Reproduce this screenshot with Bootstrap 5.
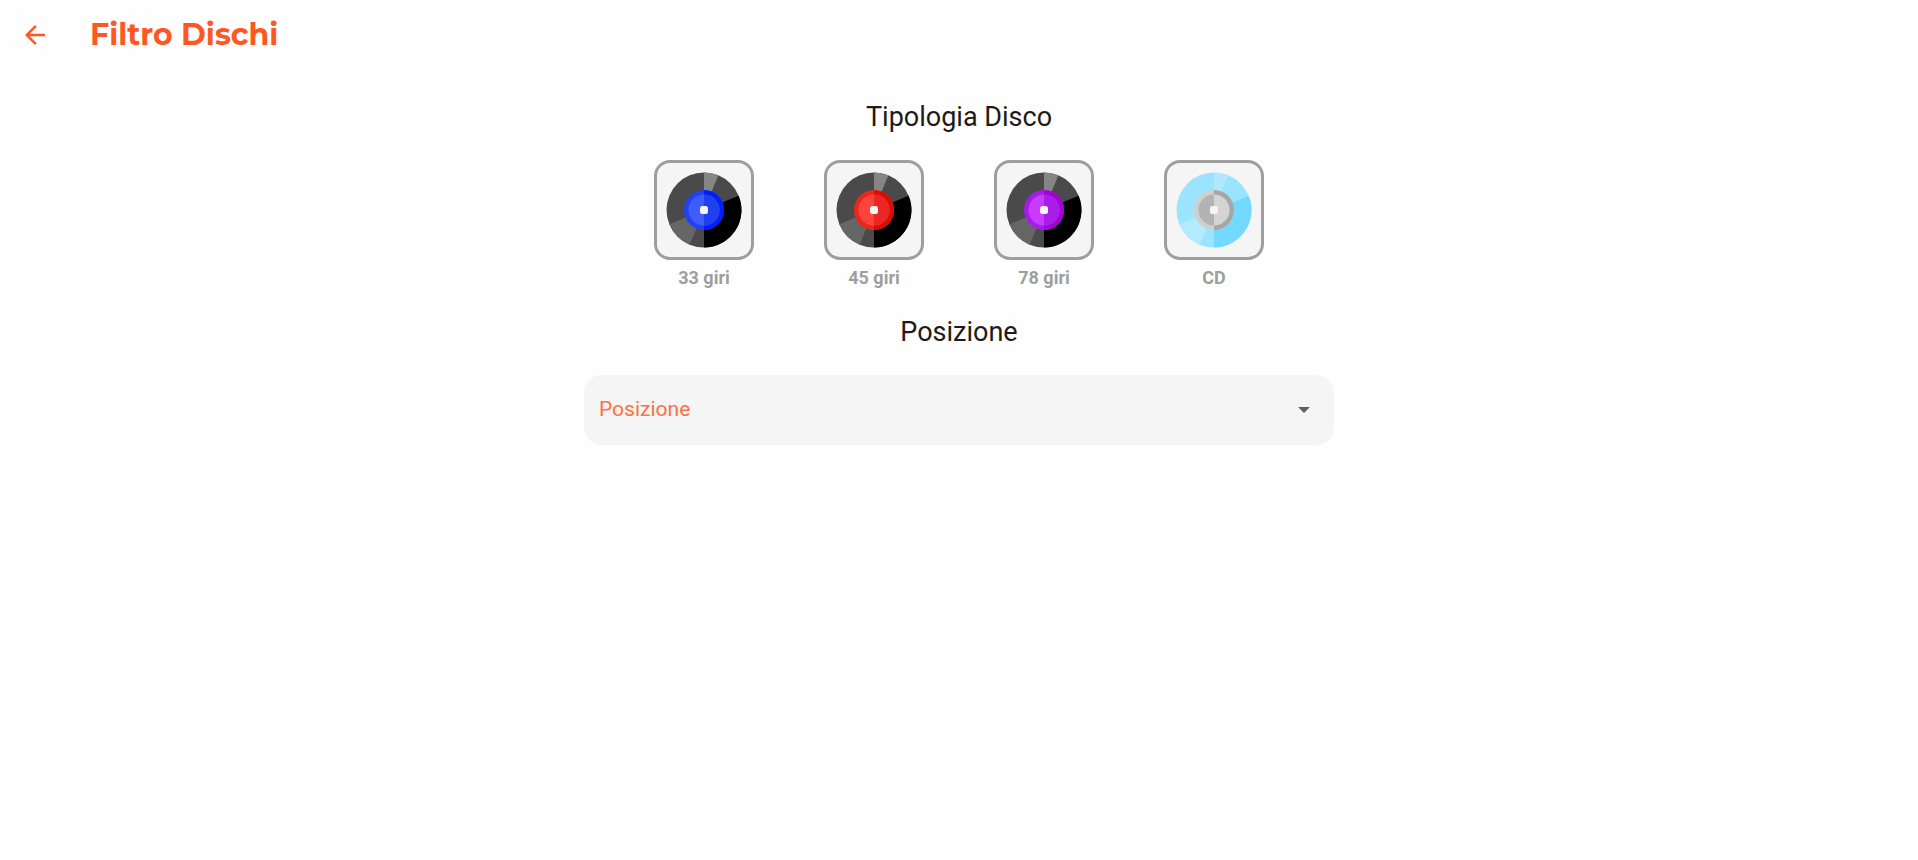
<!DOCTYPE html>
<html lang="it">
<head>
<meta charset="utf-8">
<meta name="viewport" content="width=device-width, initial-scale=1">
<title>Filtro Dischi</title>
<link href="https://cdn.jsdelivr.net/npm/bootstrap@5.3.0/dist/css/bootstrap.min.css" rel="stylesheet">
<style>
  body { background: #fefefe; color: #201a18; font-family: Roboto, sans-serif; }
  .topbar { height: 70px; padding-left: 20px; gap: 40px; color: #ff5722; }
  .back-link { width: 30px; height: 30px; color: inherit; }
  .page-title { font: 700 30px/36px Montserrat, Inter, sans-serif; }
  .filters { max-width: 750px; padding-top: 29px; }
  .section-title { font-size: 27px; line-height: 37px; font-weight: 400; color: inherit; }
  .disc-row { margin-bottom: 26px; }
  .disc-option { width: 100px; color: #9e9e9e; font-size: 18px; line-height: 20px; font-weight: 700; }
  .disc-tile { height: 100px; border: 3px solid #9e9e9e; border-radius: 16px; background: #f5f5f5; margin-bottom: 8px; }
  .position-select {
    height: 70px; padding: 0 50px 0 15px; border: 0; border-radius: 18px;
    font-size: 21px; color: #ff7043; background-color: #f5f5f5;
    background-image: url("data:image/svg+xml,%3Csvg xmlns='http://www.w3.org/2000/svg' viewBox='0 0 12 6'%3E%3Cpath fill='%23616161' d='M0 0h12L6 6z'/%3E%3C/svg%3E");
    background-size: 12px 6px; background-position: right 24px center;
  }
  .disc33 { --rl: #2143ef; --rr: #001cff; --il: #3f5cff; --ir: #2040ec; }
  .disc45 { --rl: #e8281f; --rr: #d90d06; --il: #ff423c; --ir: #ea2723; }
  .disc78 { --rl: #a41de6; --rr: #a300d4; --il: #c93bff; --ir: #a81de8; }
  .disccd { --rl: #cfcfcf; --rr: #a6a6a6; --il: #b3b3b3; --ir: #d4d4d4; --base: #9be4ff; --dark: #73d9ff; --top: #b3e6ff; --low: #b3eaff; }
</style>
</head>
<body>
<svg class="d-none" aria-hidden="true">
  <symbol id="disc" viewBox="-38 -38 76 76">
    <circle r="37.5" style="fill:var(--base,#4a4a4a)"/>
    <path d="M0 0V-37.5A37.5 37.5 0 0 1 14.35-34.65Z" style="fill:var(--top,#858585)"/>
    <path d="M0 0L34.65-14.35A37.5 37.5 0 0 1 0 37.5Z" style="fill:var(--dark,#000)"/>
    <path d="M0 0L-14.35 34.65A37.5 37.5 0 0 1-34.65 14.35Z" style="fill:var(--low,#666)"/>
    <circle r="20" style="fill:var(--rl)"/>
    <path d="M0-20A20 20 0 0 1 0 20Z" style="fill:var(--rr)"/>
    <circle r="15.5" style="fill:var(--il)"/>
    <path d="M0-15.5A15.5 15.5 0 0 1 0 15.5Z" style="fill:var(--ir)"/>
    <rect x="-4" y="-4" width="8" height="8" rx="2.5" fill="#f5f5f5"/>
  </symbol>
</svg>

<header class="topbar d-flex align-items-center">
  <a class="back-link d-flex align-items-center justify-content-center" href="#" aria-label="Indietro">
    <svg width="30" height="30" viewBox="0 0 24 24" fill="currentColor"><path d="M20 11H7.83l5.59-5.59L12 4l-8 8 8 8 1.41-1.41L7.83 13H20z"/></svg>
  </a>
  <h1 class="page-title m-0">Filtro Dischi</h1>
</header>

<main class="filters mx-auto">
  <h2 class="section-title text-center mb-4">Tipologia Disco</h2>
  <div class="disc-row d-flex justify-content-evenly">
    <button type="button" class="disc-option disc33 btn border-0 p-0">
      <span class="disc-tile d-flex align-items-center justify-content-center"><svg width="76" height="76"><use href="#disc"/></svg></span>33 giri
    </button>
    <button type="button" class="disc-option disc45 btn border-0 p-0">
      <span class="disc-tile d-flex align-items-center justify-content-center"><svg width="76" height="76"><use href="#disc"/></svg></span>45 giri
    </button>
    <button type="button" class="disc-option disc78 btn border-0 p-0">
      <span class="disc-tile d-flex align-items-center justify-content-center"><svg width="76" height="76"><use href="#disc"/></svg></span>78 giri
    </button>
    <button type="button" class="disc-option disccd btn border-0 p-0">
      <span class="disc-tile d-flex align-items-center justify-content-center"><svg width="76" height="76"><use href="#disc"/></svg></span>CD
    </button>
  </div>
  <h2 class="section-title text-center mb-4"><label for="posizione">Posizione</label></h2>
  <select id="posizione" class="position-select form-select">
    <option selected>Posizione</option>
  </select>
</main>
<script src="https://cdn.jsdelivr.net/npm/bootstrap@5.3.0/dist/js/bootstrap.bundle.min.js"></script>
</body>
</html>
